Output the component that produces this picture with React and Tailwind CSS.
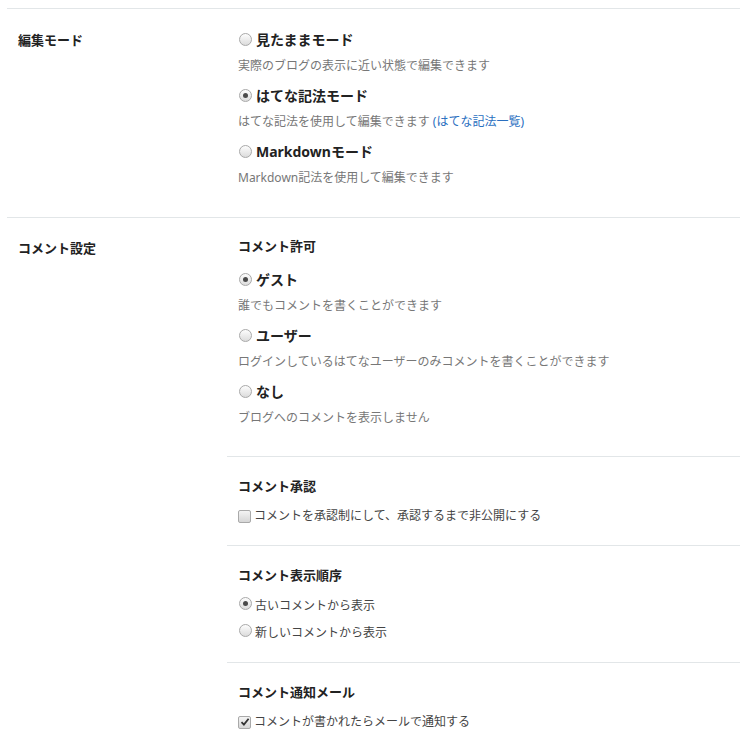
import React from 'react';

const font = { fontFamily: '"Noto Sans", "Noto Sans CJK JP", sans-serif' };

const Radio = ({ checked }) => (
  <span className="relative inline-block w-[13px] h-[13px] rounded-full border border-[#a9a9a9] bg-gradient-to-b from-[#fdfdfd] to-[#dcdcdc] shrink-0">
    {checked && (
      <span className="absolute left-[3px] top-[3px] w-[5px] h-[5px] rounded-full bg-[#4a4a4a]" />
    )}
  </span>
);

const Checkbox = ({ checked }) => (
  <span className="relative inline-flex items-center justify-center w-[13px] h-[13px] rounded-[2px] border border-[#a9a9a9] bg-gradient-to-b from-[#f4f4f4] to-[#d6d6d6] shrink-0">
    {checked && (
      <svg width="10" height="10" viewBox="0 0 10 10">
        <path d="M1.5 5.2 L3.9 7.6 L8.6 1.8" fill="none" stroke="#333" strokeWidth="1.8" />
      </svg>
    )}
  </span>
);

const Option = ({ checked, label, desc, last }) => (
  <div className={last ? '' : 'mb-[11px]'}>
    <label className="flex items-center h-5 gap-[4px]">
      <span className="ml-[1px]">
        <Radio checked={checked} />
      </span>
      <span className="text-[14px] font-bold text-[#222] leading-5">{label}</span>
    </label>
    <p className="mt-[7px] text-[12px] leading-[18px] text-[#777]">{desc}</p>
  </div>
);

const SubTitle = ({ children }) => (
  <h3 className="text-[13px] font-bold text-[#222] leading-5">{children}</h3>
);

const CheckRow = ({ checked, children, className = '' }) => (
  <label className={`flex items-center h-[18px] gap-[3px] text-[12px] text-[#444] ${className}`}>
    <Checkbox checked={checked} />
    <span>{children}</span>
  </label>
);

const RadioRow = ({ checked, children, className = '' }) => (
  <label className={`flex items-center h-[18px] gap-[3px] text-[12px] text-[#444] ${className}`}>
    <span className="ml-[1px]">
      <Radio checked={checked} />
    </span>
    <span>{children}</span>
  </label>
);

export default function App() {
  return (
    <div className="bg-white min-h-screen pt-2 pl-[7px]" style={font}>
      {/* 編集モード */}
      <section className="flex border-t border-[#e2e6e8]">
        <div className="w-[220px] shrink-0 pl-[11px] pt-[21px]">
          <h2 className="text-[13px] font-bold text-[#222] leading-5">編集モード</h2>
        </div>
        <div className="flex-1 pl-[11px] pt-[21px] pb-[30px]">
          <Option label="見たままモード" desc="実際のブログの表示に近い状態で編集できます" />
          <Option
            checked
            label="はてな記法モード"
            desc={
              <>
                はてな記法を使用して編集できます{' '}
                <a href="#" className="text-[#2a6fbf]">(はてな記法一覧)</a>
              </>
            }
          />
          <Option last label="Markdownモード" desc="Markdown記法を使用して編集できます" />
        </div>
      </section>

      {/* コメント設定 */}
      <section className="flex border-t border-[#e2e6e8]">
        <div className="w-[220px] shrink-0 pl-[11px] pt-[20px]">
          <h2 className="text-[13px] font-bold text-[#222] leading-5">コメント設定</h2>
        </div>
        <div className="flex-1">
          <div className="pl-[11px] pt-[18px] pb-[29px]">
            <SubTitle>コメント許可</SubTitle>
            <div className="mt-[14px]">
              <Option checked label="ゲスト" desc="誰でもコメントを書くことができます" />
              <Option label="ユーザー" desc="ログインしているはてなユーザーのみコメントを書くことができます" />
              <Option last label="なし" desc="ブログへのコメントを表示しません" />
            </div>
          </div>

          <div className="border-t border-[#e2e6e8] pl-[11px] pt-[19px] pb-[20px]">
            <SubTitle>コメント承認</SubTitle>
            <CheckRow className="mt-[11px]">コメントを承認制にして、承認するまで非公開にする</CheckRow>
          </div>

          <div className="border-t border-[#e2e6e8] pl-[11px] pt-[19px] pb-[20px]">
            <SubTitle>コメント表示順序</SubTitle>
            <RadioRow checked className="mt-[12px]">古いコメントから表示</RadioRow>
            <RadioRow className="mt-[9px]">新しいコメントから表示</RadioRow>
          </div>

          <div className="border-t border-[#e2e6e8] pl-[11px] pt-[19px] pb-[20px]">
            <SubTitle>コメント通知メール</SubTitle>
            <CheckRow checked className="mt-[11px]">コメントが書かれたらメールで通知する</CheckRow>
          </div>
        </div>
      </section>
    </div>
  );
}
